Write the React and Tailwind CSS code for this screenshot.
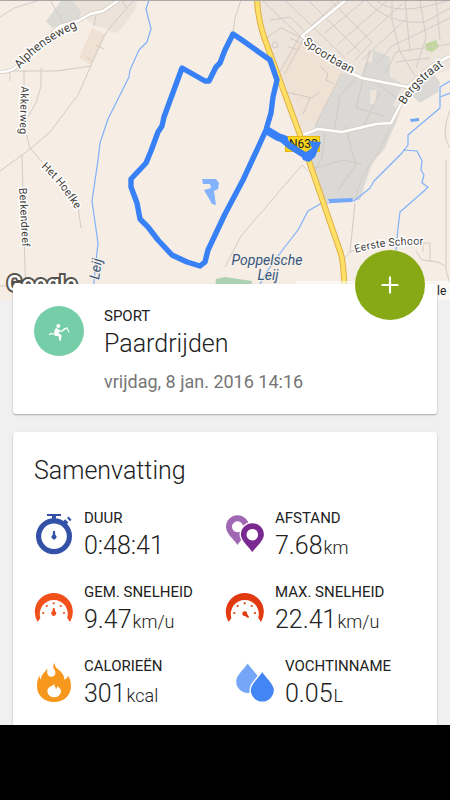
import React from 'react';
import { Plus } from 'lucide-react';

const localStreets = [
  'M0 17 L14 8 L40 0', 'M50 0 L66 28', 'M94 26 L96 16', 'M134 0 L112 25 L104 36 L78 95 L50 132 L29 150 L0 171',
  'M10 71 L57 71 L91 66', 'M10 72 V81', 'M24 71 V100', 'M41 68 V86 L36 103 L24 124 L30 149', 'M31 149 L42 162 M22 154 L25 270 L26 284',
  'M78 206 L81 228', 'M96 45 L104 49 M86 57 L92 61', 'M0 286 H14', 'M122 0 L127 9', 'M241 0 L235 18 L233 33',
  'M302 165 L241 236 L225 267 M302 165 L308 171', 'M225 284 L216 300', 'M355 203 L350 252 L342 261 M350 252 L359 248',
  'M355 200 Q358 180 378 153 L390 128', 'M416 251 L422 260 L438 262 L445 266 M423 252 V243 H430 V262', 'M446 160 V270 L450 284',
  'M450 110 Q440 135 450 148', 'M262 0 L300 36', 'M285 0 L345 58', 'M300 36 L278 75', 'M270 20 L290 17 L330 56', 'M266 38 L281 28 L302 38',
  'M308 0 L360 52', 'M330 0 L372 42 L355 60', 'M312 25 L340 0', 'M325 33 L365 0', 'M338 44 L388 0', 'M347 54 L402 4', 'M362 60 L407 18',
  'M375 66 L392 46 L450 18', 'M385 74 L396 52 L450 44', 'M366 0 Q388 25 425 22 L450 8', 'M376 0 Q395 18 450 0', 'M392 0 L392 20 L400 52 L415 76',
  'M405 0 L410 52', 'M420 0 L426 38 L416 68', 'M436 0 L440 40', 'M396 62 L430 58', 'M284 75 L305 36', 'M290 38 L310 47 M288 47 L300 50',
];

const estateStreets = [
  'M342 73 L315 126', 'M358 75 L340 96 L334 130', 'M373 80 L394 96 L400 104', 'M345 126 L356 165 L338 190',
  'M310 170 L343 160 L362 164', 'M325 134 L322 158 L314 170', 'M370 50 L356 108 L384 116', 'M380 92 L362 130',
];

const route =
  'M266 130 L271 113 L273 97 L277 80 L270 60 L242 40 L233 34 L225 50 L220 63 L216 67 L209 81 L205 81 L182 68 L164 117 L162 126 L158 132 L151 151 L146 163 L131 179 L131 187 L137 203 L140 219 L148 227 L158 240 L172 255 L187 262 L200 266 L205 262 L208 250 L225 214 L243 180 L256 152 Z';

const whiteRoads =
  'M0 72 Q12 72 18 65 L35 48 L60 26 L78 21 L90 14 L103 11 L119 0 M346 0 L302 36 L340 68 L362 78 L382 82 L408 87 L430 67 L450 56 M404 98 L391 123 L376 124 L342 132 L318 129 L302 135';

const highway = 'M257 0 Q258 23 268 48 L300 135 L341 254 Q344 265 345 300';

function MapLabel({ path, size, children }) {
  return (
    <text fontSize={size} fill="#44403a" stroke="#fff" strokeWidth="3" strokeLinejoin="round" paintOrder="stroke">
      <textPath href={path}>{children}</textPath>
    </text>
  );
}

function RouteMap() {
  return (
    <svg
      viewBox="0 0 450 300"
      preserveAspectRatio="xMidYMin slice"
      className="block h-[300px] w-full bg-[#f6ede4] font-['Roboto',sans-serif]"
      role="img"
      aria-label="Route"
    >
      <defs>
        <path id="alphenseweg" d="M20 69 Q42 41 90 22" />
        <path id="akkerweg" d="M21 86 L19 150" />
        <path id="hethoefke" d="M41 167 Q60 184 78 213" />
        <path id="berkendreef" d="M19 188 L23 260" />
        <path id="spoorbaan" d="M303 43 Q325 62 365 80" />
        <path id="bergstraat" d="M405 105 Q418 82 450 62" />
        <path id="eersteschoor" d="M356 253 Q385 243 440 245" />
        <path id="leij" d="M99 280 L104 245" />
      </defs>

      {/* built-up areas */}
      <path d="M257 0 H450 V70 L424 78 L405 92 L398 120 L378 155 L356 200 L324 200 L300 135 L272 55 Z" fill="#ede4dc" />
      <path d="M60 0 H138 L135 10 L118 33 L112 32 L106 28 L94 26 L84 16 Z" fill="#ece3da" />
      <path d="M92 28 L106 35 L91 65 L79 58 Z" fill="#efe1d3" />
      <path d="M302 36 L342 74 L315 124 L302 119 L281 68 Z" fill="#efe1d4" />
      <path d="M62 0 H72 L81 12 L80 19 L52 28 L46 21 Z" fill="#dcdad5" />
      <path d="M343 73 L360 78 L366 62 L372 62 L373 50 L390 57 V77 L400 82 L402 87 L393 105 L398 110 L396 122 L384 150 L372 162 L360 200 L326 202 L302 150 L315 126 Z" fill="#dbd9d5" />
      <path d="M413 82 L430 70 L440 82 L438 92 L420 103 L412 96 Z" fill="#dbd9d5" />
      <path d="M370 90 h6 v14 h-6 Z" fill="#ede4dc" />
      <path d="M425 44 L436 40 L439 47 L432 52 L426 50 Z" fill="#c0d8a0" />
      <path d="M216 279 L225 277 L252 281 L247 300 H214 Z" fill="#aed1b3" />

      <g fill="none" stroke="#d3ccc5" strokeWidth="1">
        {localStreets.map((d) => <path key={d} d={d} />)}
      </g>
      <g fill="none" stroke="#cfcac4" strokeWidth="1">
        {estateStreets.map((d) => <path key={d} d={d} />)}
        <circle cx="275" cy="45" r="3" />
        <path d="M286 92 L312 98 L320 92 M310 98 L303 114 M320 66 L328 74 L326 80 L334 84" />
      </g>

      {/* water */}
      <g fill="none" stroke="#7fb1fb" strokeWidth="1.2" strokeLinejoin="round">
        <path d="M149 0 L146 9 L151 29 L147 42 L139 50 L130 70 L129 77 L108 119 L100 143 L98 160 L92 201 L98 243 L92 300" />
        <path d="M260 284 L268 270 L281 252 L298 230 L308 211 L320 204 L345 201 L354 201 L370 188 L374 181 L402 153 L408 145 L408 135 L440 108 V87 L450 81" />
        <path d="M440 97 L450 93 M403 150 L417 151 L422 161 L421 170 L424 175 L422 183 L428 187 L424 191 L400 212 L398 228 L396 250" />
      </g>
      <path d="M328 199 L353 198 L352 202 L330 203 Z M410 119 L419 118 V121 L411 122 Z" fill="#73a8f8" />
      <path d="M202 179 H216 L219 183 L218 189 L214 191 L216 205 L212 204 L204 190 L211 188 L210 184 L203 184 Z" fill="#82b3fc" />

      {/* main roads */}
      <g fill="none" strokeLinejoin="round">
        <path d={whiteRoads} stroke="#d5ccc2" strokeWidth="4" />
        <path d={whiteRoads} stroke="#fff" strokeWidth="2.6" />
        <path d={highway} stroke="#dfae45" strokeWidth="6" />
        <path d={highway} stroke="#fee067" strokeWidth="4" />
      </g>

      <rect x="285.5" y="136.5" width="34" height="15" fill="#fbd51d" stroke="#e6b610" />
      <text x="289" y="148" fontSize="12" fill="#222">N630</text>

      <g fill="none" stroke="#3880f5" strokeLinejoin="round" strokeLinecap="round">
        <path d={route} strokeWidth="5.4" />
        <path d="M268 131 L278 137 L284 139" strokeWidth="8" />
        <path d="M282 139 L290 146 L306 156" strokeWidth="6.5" />
      </g>
      <path d="M309 141 L321 142 L315 157 L309 162 L303 160 L301 154 L306 152 L312 148 Z" fill="#3880f5" />

      <MapLabel path="#alphenseweg" size="12">Alphenseweg</MapLabel>
      <MapLabel path="#akkerweg" size="11">Akkerweg</MapLabel>
      <MapLabel path="#hethoefke" size="11">Het Hoefke</MapLabel>
      <MapLabel path="#berkendreef" size="11">Berkendreef</MapLabel>
      <MapLabel path="#spoorbaan" size="12">Spoorbaan</MapLabel>
      <MapLabel path="#bergstraat" size="12">Bergstraat</MapLabel>
      <MapLabel path="#eersteschoor" size="11">Eerste Schoor</MapLabel>
      <g fontSize="14" fontStyle="italic" fill="#35577f" stroke="#f6ede4" strokeWidth="2" paintOrder="stroke">
        <text><textPath href="#leij">Leij</textPath></text>
        <text x="267" y="265" textAnchor="middle">Poppelsche</text>
        <text x="268" y="280" textAnchor="middle">Leij</text>
      </g>

      <text x="7" y="291" fontSize="22" fontWeight="500" fill="#fff" stroke="#55524e" strokeWidth="4" paintOrder="stroke">Google</text>
      <rect x="296" y="281" width="154" height="19" fill="#fff" fillOpacity="0.6" />
      <text x="437" y="295" fontSize="12" fill="#222">le</text>
      <rect width="450" height="1" fill="#aaa9a7" />
    </svg>
  );
}

function StopwatchIcon() {
  return (
    <>
      <circle cx="20" cy="23.3" r="15.4" fill="none" stroke="#3451a8" strokeWidth="5.2" />
      <path d="M13 1 H27 V3 H22 V7 H18 V3 H13 Z" fill="#3451a8" />
      <path d="M29 8.5 L31 6.2 L34.5 9.5 L32 11.5 Z M33 5 L34.6 3.6 L37.5 6.8 L36 8.2 Z" fill="#3451a8" />
      <path d="M19 18 H21 L21.3 22 A2.4 2.4 0 1 1 18.7 22 Z" fill="#3451a8" />
    </>
  );
}

function PinsIcon() {
  return (
    <>
      <path fillRule="evenodd" fill="#a067b2" d="M12.5 32 C9 26 1 21 1 13.7 A11.5 11.5 0 0 1 24 13.7 C24 21 16 26 12.5 32 Z M12.5 8.2 a5.5 5.5 0 1 0 0.1 0 Z" />
      <path fill="#7a2990" stroke="#fff" strokeWidth="1.4" d="M27.3 40.5 C24 34 15.2 29 15.2 21.7 A12.2 12.2 0 0 1 39.6 21.7 C39.6 29 31 34 27.3 40.5 Z" />
      <circle cx="27.3" cy="21.7" r="5.8" fill="#fff" />
    </>
  );
}

function GaugeIcon({ color, needle }) {
  return (
    <g fill={color}>
      <path d="M3.6 35 A19 19 0 1 1 36 35 L33.2 31 A14 14 0 1 0 6.4 31 Z" />
      <circle cx="9.3" cy="26" r="1.1" />
      <circle cx="12.7" cy="19" r="1.1" />
      <circle cx="19.7" cy="16.3" r="1.1" />
      <circle cx="26.7" cy="19" r="1.1" />
      <circle cx="30" cy="26" r="1.1" />
      <path transform={`rotate(${needle} 19.7 26.5)`} d="M19 21 H20.5 L21.3 24.6 A2.4 2.4 0 1 1 18.2 24.6 Z" />
    </g>
  );
}

function FlameIcon() {
  return (
    <>
      <path
        fill="#f7981d"
        d="M21 2 C20.5 5.5 22.5 7 25.5 9.5 C28.5 12 30.5 15 30.3 18.5 C32.5 18 33.8 16.5 34 14.5 C36 17.5 37 21 37 25 C37 34.5 30 41 20 41 C10 41 3 34.5 3 25 C3 21 3.8 17.5 5.6 14 C5.4 16 5.8 17.6 7 18.5 C7 13.5 11 11.5 13.6 7 C12.6 10.5 13 15.6 17.3 15.8 C21.5 15.8 22.3 11.5 20.5 9 C18.6 6.4 18.8 4 21 2 Z"
      />
      <path fill="#fff" d="M20.8 22.5 C19.5 24.5 21.5 25.5 22 28 C23.2 27 23.4 26 23 25 C25.8 26.4 27 28.2 27 30.5 A6.9 6.6 0 0 1 13.3 30.5 C13.3 25.5 18.5 25.5 20.8 22.5 Z" />
    </>
  );
}

function DropsIcon() {
  return (
    <>
      <path fill="#76a6f7" d="M12.7 2.5 C17 9 24.2 14 24.2 20.4 A11.5 11.5 0 0 1 1.2 20.4 C1.2 14 8.5 9 12.7 2.5 Z" />
      <path fill="#4285f4" stroke="#fff" strokeWidth="1.4" d="M27.3 10 C31.5 17 39.5 22 39.5 29 A12.2 12.2 0 0 1 15.1 29 C15.1 22 23 17 27.3 10 Z" />
    </>
  );
}

function RiderIcon() {
  return (
    <svg viewBox="0 0 50 50" className="size-[50px] shrink-0 rounded-full bg-[#76cea8]" aria-hidden="true">
      <circle cx="24.3" cy="20" r="2" fill="#fff" />
      <path d="M22.5 22 C20 23 19.5 28 21 30 L24.8 30.3 L25 34.5 H27 L27.6 29 L24.8 27.3 L25.2 25.8 L29 25.5 L28.8 24.4 L25.8 24.3 Z" fill="#fff" />
      <path d="M28 25 L33 21.8 L35 26.5 M29 23.6 L31.5 22" fill="none" stroke="#fff" strokeWidth="1.1" />
      <path d="M15 28.6 Q17 27 20 28.2" fill="none" stroke="#fff" strokeWidth="1.2" />
    </svg>
  );
}

const stats = [
  { label: 'DUUR', value: '0:48:41', icon: <StopwatchIcon /> },
  { label: 'AFSTAND', value: '7.68', unit: 'km', icon: <PinsIcon /> },
  { label: 'GEM. SNELHEID', value: '9.47', unit: 'km/u', icon: <GaugeIcon color="#f1501b" needle={0} /> },
  { label: 'MAX. SNELHEID', value: '22.41', unit: 'km/u', icon: <GaugeIcon color="#e23a10" needle={135} /> },
  { label: 'CALORIEËN', value: '301', unit: 'kcal', icon: <FlameIcon /> },
  { label: 'VOCHTINNAME', value: '0.05', unit: 'L', icon: <DropsIcon />, indent: true },
];

function Stat({ label, value, unit, icon, indent }) {
  return (
    <div className={indent ? 'flex gap-2.5 pl-2.5' : 'flex gap-2.5'}>
      <svg viewBox="0 0 40 42" className="mt-[5px] h-[42px] w-10 shrink-0" aria-hidden="true">{icon}</svg>
      <dl>
        <dt className="text-[15px] leading-5 whitespace-nowrap">{label}</dt>
        <dd className="text-[25px] leading-9 font-light whitespace-nowrap">
          {value}
          {unit && <span className="ml-px text-[18px] leading-none">{unit}</span>}
        </dd>
      </dl>
    </div>
  );
}

export default function App() {
  return (
    <div className="flex min-h-screen flex-col bg-black font-['Roboto',sans-serif] text-[#212121]">
      <main className="bg-[#f0f0f0]">
        <RouteMap />

        <div className="relative -mt-4 px-[13px]">
          <section className="flex gap-5 rounded-[3px] bg-white px-[21px] pt-[22px] pb-5 shadow-[0_1px_2px_rgba(0,0,0,0.3)]">
            <RiderIcon />
            <div>
              <p className="text-[15px] leading-5">SPORT</p>
              <h1 className="text-[25px] leading-9 font-light">Paardrijden</h1>
              <p className="mt-2 text-[18px] leading-6 text-[#757575]">vrijdag, 8 jan. 2016 14:16</p>
            </div>
          </section>
          <button
            type="button"
            aria-label="Toevoegen"
            className="absolute -top-[34px] right-[25px] flex size-[70px] items-center justify-center rounded-full bg-[#87a916] text-white"
          >
            <Plus size={26} strokeWidth={2} />
          </button>
        </div>

        <div className="mt-[18px] px-[13px]">
          <section className="rounded-t-[3px] bg-white px-[21px] pt-[23px] pb-[13px] shadow-[0_1px_2px_rgba(0,0,0,0.3)]">
            <h2 className="text-[25px] leading-8 font-light">Samenvatting</h2>
            <div className="mt-[21px] grid grid-cols-2 gap-y-[18px]">
              {stats.map((stat) => <Stat key={stat.label} {...stat} />)}
            </div>
          </section>
        </div>
      </main>
    </div>
  );
}
